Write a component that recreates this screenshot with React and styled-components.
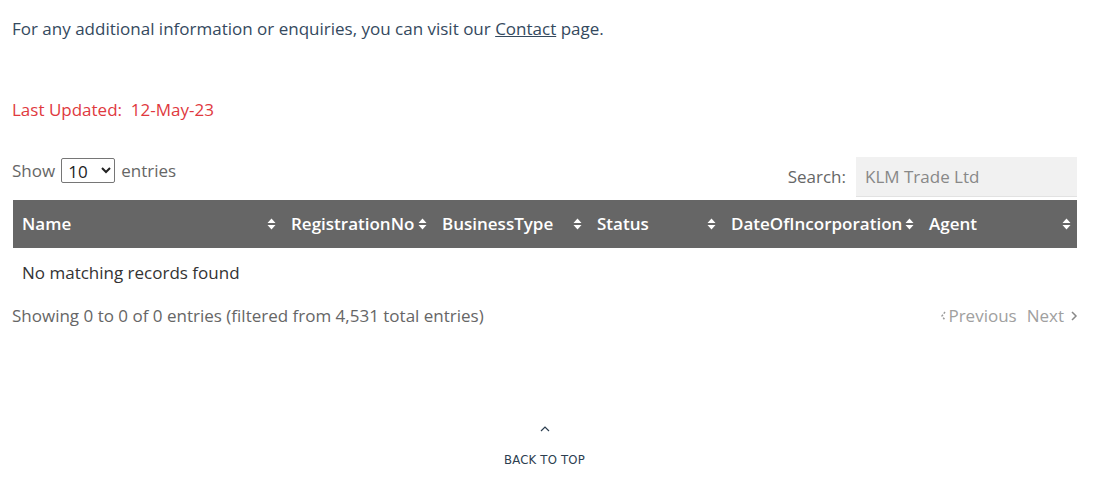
import React from "react";
import styled, { createGlobalStyle } from "styled-components";

const GlobalStyle = createGlobalStyle`
  body {
    margin: 0;
    background: #fff;
    font-family: "Open Sans", "Liberation Sans", sans-serif;
  }
`;

const Page = styled.div`
  width: 1095px;
  height: 504px;
  padding: 0 18px 0 12px;
  box-sizing: border-box;
  overflow: hidden;
`;

const Intro = styled.p`
  margin: 0;
  padding-top: 17px;
  font-size: 17px;
  line-height: 24px;
  color: #34495e;
  a {
    color: #34495e;
    text-decoration: underline;
  }
`;

const Updated = styled.p`
  margin: 0;
  padding-top: 57px;
  font-size: 17px;
  line-height: 24px;
  color: #e0393e;
`;

const Controls = styled.div`
  display: flex;
  justify-content: space-between;
  align-items: flex-start;
  margin-top: 35px;
  margin-left: 1px;
  font-size: 17px;
  color: #666;
`;

const Length = styled.label`
  display: flex;
  align-items: center;
  gap: 6px;
  margin-left: -1px;
  height: 26px;
`;

const Select = styled.select`
  width: 54px;
  height: 25px;
  font-family: "Open Sans", "Liberation Sans", sans-serif;
  font-size: 17px;
  color: #222;
  border: 1px solid #767676;
  border-radius: 2px;
  background: #fff;
  padding: 0 2px;
`;

const SearchBox = styled.label`
  display: flex;
  align-items: center;
  gap: 10px;
  line-height: 40px;
`;

const SearchInput = styled.input`
  width: 221px;
  height: 40px;
  box-sizing: border-box;
  border: none;
  border-bottom: 1px solid #e2e2e2;
  background: #f1f1f1;
  padding: 0 9px;
  font-family: "Open Sans", "Liberation Sans", sans-serif;
  font-size: 17px;
  color: #888;
  outline: none;
  &::placeholder { color: #888; }
`;

const Table = styled.table`
  width: 1064px;
  margin-top: 3px;
  margin-left: 1px;
  border-collapse: collapse;
  table-layout: fixed;
`;

const Th = styled.th`
  position: relative;
  box-sizing: border-box;
  height: 48px;
  padding: 0 20px 1px 9px;
  background: #666;
  color: #fff;
  font-size: 17px;
  font-weight: 600;
  text-align: left;
  white-space: nowrap;
  width: ${p => p.$w}px;
`;

const SortIcon = styled.svg`
  position: absolute;
  right: 6px;
  top: 50%;
  margin-top: -6px;
`;

const Td = styled.td`
  padding: 13px 9px 12px 9px;
  font-size: 17px;
  line-height: 24px;
  color: #333;
`;

const Footer = styled.div`
  display: flex;
  justify-content: space-between;
  align-items: center;
  margin-top: 7px;
  font-size: 17px;
  line-height: 24px;
  color: #666;
`;

const Pager = styled.div`
  display: flex;
  align-items: center;
  gap: 10px;
  color: #a0a0a0;
  margin-right: -1px;
`;

const PageLink = styled.span`
  display: flex;
  align-items: center;
  gap: ${p => p.$gap || 2}px;
`;

const BackTop = styled.div`
  display: flex;
  flex-direction: column;
  align-items: center;
  margin-top: 98px;
  color: #2c3e50;
`;

const BackText = styled.span`
  margin-top: 20px;
  font-family: "Liberation Sans Narrow", "DejaVu Sans Condensed", "Liberation Sans", sans-serif;
  font-stretch: condensed;
  font-size: 13px;
  letter-spacing: 0.2px;
  color: #2c3e50;
`;

const Sort = () => (
  <SortIcon width="9" height="12" viewBox="0 0 9 12">
    <path d="M4.5 0.5 L8.5 5 H0.5 Z M4.5 11.5 L8.5 7 H0.5 Z" fill="#fff" />
  </SortIcon>
);

const columns = [
  ["Name", 269],
  ["RegistrationNo", 151],
  ["BusinessType", 155],
  ["Status", 134],
  ["DateOfIncorporation", 198],
  ["Agent", 157],
];

export default function App() {
  return (
    <Page>
      <GlobalStyle />
      <Intro>
        For any additional information or enquiries, you can visit our <a href="#">Contact</a> page.
      </Intro>
      <Updated>Last Updated:&nbsp; 12-May-23</Updated>
      <Controls>
        <Length>
          Show
          <Select defaultValue="10">
            <option value="10">10</option>
            <option value="25">25</option>
            <option value="50">50</option>
          </Select>
          entries
        </Length>
        <SearchBox>
          Search:
          <SearchInput placeholder="KLM Trade Ltd" />
        </SearchBox>
      </Controls>
      <Table>
        <thead>
          <tr>
            {columns.map(([label, w]) => (
              <Th key={label} $w={w}>
                {label}
                <Sort />
              </Th>
            ))}
          </tr>
        </thead>
        <tbody>
          <tr>
            <Td colSpan={6}>No matching records found</Td>
          </tr>
        </tbody>
      </Table>
      <Footer>
        <span>Showing 0 to 0 of 0 entries (filtered from 4,531 total entries)</span>
        <Pager>
          <PageLink $gap={1}>
            <svg width="7" height="12" viewBox="0 0 7 12">
              <path d="M5 2 L2 6 L5 10" stroke="#999" strokeWidth="1.5" fill="none" strokeDasharray="2 1.5" />
            </svg>
            Previous
          </PageLink>
          <PageLink $gap={6}>
            Next
            <svg width="8" height="12" viewBox="0 0 8 12">
              <path d="M2 2 L6 6 L2 10" stroke="#888" strokeWidth="1.5" fill="none" />
            </svg>
          </PageLink>
        </Pager>
      </Footer>
      <BackTop>
        <svg width="10" height="6" viewBox="0 0 10 6">
          <path d="M1 5 L5 1 L9 5" stroke="#2c3e50" strokeWidth="1.2" fill="none" />
        </svg>
        <BackText>BACK TO TOP</BackText>
      </BackTop>
    </Page>
  );
}
